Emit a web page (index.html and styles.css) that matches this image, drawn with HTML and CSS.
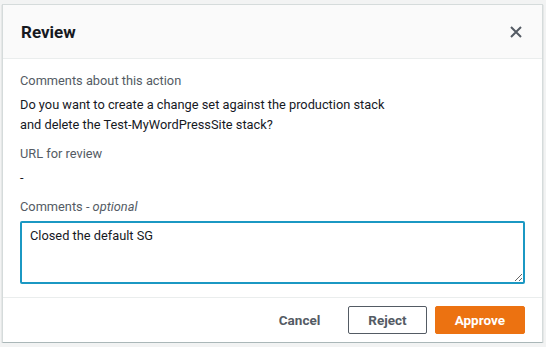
FILE: index.html
```html
<!DOCTYPE html>
<html lang="en">
<head>
<meta charset="utf-8">
<title>Review</title>
<link rel="stylesheet" href="styles.css">
</head>
<body>
  <div class="modal">
    <div class="modal-header">
      <h2 class="modal-title">Review</h2>
      <button class="close" aria-label="Close">
        <svg width="12" height="12" viewBox="0 0 12 12"><path d="M1 1 L11 11 M11 1 L1 11" stroke="#545b64" stroke-width="2" fill="none"/></svg>
      </button>
    </div>
    <div class="modal-body">
      <div class="field">
        <div class="label">Comments about this action</div>
        <div class="value">Do you want to create a change set against the production stack<br>and delete the Test-MyWordPressSite stack?</div>
      </div>
      <div class="field">
        <div class="label">URL for review</div>
        <div class="value">-</div>
      </div>
      <div class="field">
        <label class="label" for="c">Comments - <i>optional</i></label>
        <textarea id="c" class="textarea">Closed the default SG</textarea>
      </div>
    </div>
    <div class="modal-footer">
      <button class="btn btn-link">Cancel</button>
      <button class="btn btn-normal">Reject</button>
      <button class="btn btn-primary">Approve</button>
    </div>
  </div>
</body>
</html>
```
FILE: styles.css
```css
html, body {
  margin: 0;
  background: #f2f3f3;
}
body {
  padding: 4px 3px 0 2px;
  font-family: Roboto, "Liberation Sans", sans-serif;
  font-size: 12.8px;
  color: #16191f;
}
.modal {
  background: #fff;
  border: 1px solid #d5dbdb;
  border-bottom-color: #aab7b8;
  box-shadow: 0 1px 1px rgba(0, 28, 36, 0.3);
  display: flex;
  flex-direction: column;
}
.modal-header {
  background: #fafafa;
  border-bottom: 1px solid #eaeded;
  height: 53px;
  display: flex;
  align-items: center;
  justify-content: space-between;
  padding: 0 20px 0 18px;
}
.modal-title {
  margin: 0;
  font-size: 17px;
  font-weight: 700;
  color: #16191f;
}
.close {
  border: 0;
  background: none;
  padding: 0;
  width: 12px;
  height: 12px;
  display: flex;
}
.modal-body {
  padding: 12px 17px 13px 17px;
  display: flex;
  flex-direction: column;
  gap: 9px;
}
.field {
  display: flex;
  flex-direction: column;
}
.label {
  color: #545b64;
  line-height: 20px;
  padding-bottom: 4px;
}
.label i {
  font-style: italic;
}
.value {
  line-height: 20px;
}
.textarea {
  box-sizing: border-box;
  height: 63px;
  width: 100%;
  border: 2px solid #1b98c3;
  border-radius: 2px;
  padding: 3px 8px;
  font-family: Roboto, "Liberation Sans", sans-serif;
  font-size: 12.8px;
  line-height: 20px;
  color: #16191f;
  margin: 0;
  outline: none;
}
.modal-footer {
  border-top: 1px solid #eaeded;
  padding: 8px 17px 8px 17px;
  display: flex;
  justify-content: flex-end;
  gap: 8px;
}
.btn {
  box-sizing: border-box;
  height: 28px;
  padding: 0 19px;
  border-radius: 2px;
  font-family: Roboto, "Liberation Sans", sans-serif;
  font-size: 13.5px;
  font-weight: 700;
  border: 1px solid transparent;
  background: none;
  color: #545b64;
}
.btn-normal {
  border-color: #545b64;
  background: #fff;
}
.btn-primary {
  background: #ec7211;
  border-color: #ec7211;
  color: #fff;
}
```
